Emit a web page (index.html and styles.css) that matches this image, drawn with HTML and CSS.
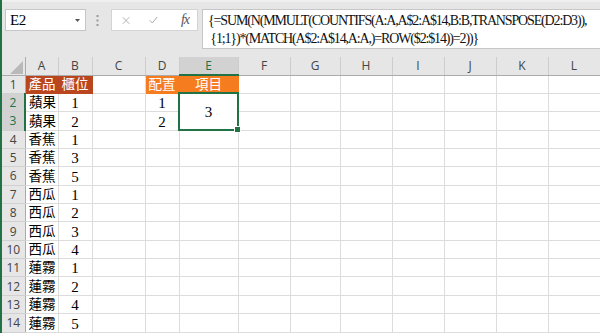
FILE: index.html
```html
<!DOCTYPE html>
<html lang="zh-Hant">
<head>
    <meta charset="UTF-8">
    <meta name="viewport" content="width=device-width, initial-scale=1.0">
    <title>Excel - 配置項目</title>
    <link rel="stylesheet" href="styles.css">
</head>
<body>
    <div class="app">
        <div class="toolbar">
            <div class="namebox">
                <span>E2</span>
                <svg class="caret" width="5" height="3" viewBox="0 0 5 3"><path d="M0 0h5L2.5 3z" fill="#555"/></svg>
            </div>
            <svg class="grip" width="3" height="11" viewBox="0 0 3 11">
                <rect x="0.5" y="0" width="2" height="2" fill="#9a9a9a"/>
                <rect x="0.5" y="4.5" width="2" height="2" fill="#9a9a9a"/>
                <rect x="0.5" y="9" width="2" height="2" fill="#9a9a9a"/>
            </svg>
            <div class="fxbox">
                <svg width="11" height="11" viewBox="0 0 11 11"><path d="M1 1l9 9M10 1l-9 9" stroke="#a6a6a6" stroke-width="1.2" fill="none"/></svg>
                <svg width="12" height="10" viewBox="0 0 12 10"><path d="M1 5.5l3.5 3.5L11 1" stroke="#a6a6a6" stroke-width="1.3" fill="none"/></svg>
                <span class="fx">fx</span>
            </div>
            <div class="formula">{=SUM(N(MMULT(COUNTIFS(A:A,A$2:A$14,B:B,TRANSPOSE(D2:D3)),<br> {1;1})*(MATCH(A$2:A$14,A:A,)=ROW($2:$14))=2))}</div>
        </div>

        <table class="sheet">
            <colgroup>
                <col class="c-rn"><col class="c-a"><col class="c-b"><col class="c-c"><col class="c-d"><col class="c-e">
                <col class="c-f"><col class="c-g"><col class="c-h"><col class="c-i"><col class="c-j"><col class="c-k"><col class="c-l">
            </colgroup>
            <tr class="head">
                <th class="corner"><svg width="13" height="13" viewBox="0 0 13 13"><path d="M13 0v13H0z" fill="#b9b9b9"/></svg></th>
                <th>A</th><th>B</th><th>C</th><th>D</th><th class="sel">E</th><th>F</th><th>G</th><th>H</th><th>I</th><th>J</th><th>K</th><th>L</th>
            </tr>
            <tr><th class="rn">1</th><td class="fill-red">產品</td><td class="fill-red mid">櫃位</td><td></td><td class="fill-orange mid">配置</td><td class="fill-orange mid">項目</td><td></td><td></td><td></td><td></td><td></td><td></td><td></td></tr>
            <tr><th class="rn sel">2</th><td>蘋果</td><td class="mid">1</td><td></td><td class="mid">1</td><td class="merged mid" rowspan="2">3<span class="handle"></span></td><td></td><td></td><td></td><td></td><td></td><td></td><td></td></tr>
            <tr><th class="rn sel">3</th><td>蘋果</td><td class="mid">2</td><td></td><td class="mid">2</td><td></td><td></td><td></td><td></td><td></td><td></td><td></td></tr>
            <tr><th class="rn">4</th><td>香蕉</td><td class="mid">1</td><td></td><td></td><td></td><td></td><td></td><td></td><td></td><td></td><td></td><td></td></tr>
            <tr><th class="rn">5</th><td>香蕉</td><td class="mid">3</td><td></td><td></td><td></td><td></td><td></td><td></td><td></td><td></td><td></td><td></td></tr>
            <tr><th class="rn">6</th><td>香蕉</td><td class="mid">5</td><td></td><td></td><td></td><td></td><td></td><td></td><td></td><td></td><td></td><td></td></tr>
            <tr><th class="rn">7</th><td>西瓜</td><td class="mid">1</td><td></td><td></td><td></td><td></td><td></td><td></td><td></td><td></td><td></td><td></td></tr>
            <tr><th class="rn">8</th><td>西瓜</td><td class="mid">2</td><td></td><td></td><td></td><td></td><td></td><td></td><td></td><td></td><td></td><td></td></tr>
            <tr><th class="rn">9</th><td>西瓜</td><td class="mid">3</td><td></td><td></td><td></td><td></td><td></td><td></td><td></td><td></td><td></td><td></td></tr>
            <tr><th class="rn">10</th><td>西瓜</td><td class="mid">4</td><td></td><td></td><td></td><td></td><td></td><td></td><td></td><td></td><td></td><td></td></tr>
            <tr><th class="rn">11</th><td>蓮霧</td><td class="mid">1</td><td></td><td></td><td></td><td></td><td></td><td></td><td></td><td></td><td></td><td></td></tr>
            <tr><th class="rn">12</th><td>蓮霧</td><td class="mid">2</td><td></td><td></td><td></td><td></td><td></td><td></td><td></td><td></td><td></td><td></td></tr>
            <tr><th class="rn">13</th><td>蓮霧</td><td class="mid">4</td><td></td><td></td><td></td><td></td><td></td><td></td><td></td><td></td><td></td><td></td></tr>
            <tr><th class="rn">14</th><td>蓮霧</td><td class="mid">5</td><td></td><td></td><td></td><td></td><td></td><td></td><td></td><td></td><td></td><td></td></tr>
        </table>
    </div>
</body>
</html>
```

FILE: styles.css
```css
* {
    box-sizing: border-box;
}

body {
    margin: 0;
    width: 600px;
    height: 333px;
    overflow: hidden;
    background-color: #e6e6e6;
    font-family: "Liberation Serif", "Noto Sans CJK TC", serif;
    color: #000;
}

.app {
    height: 333px;
    border-left: 2px solid #217346;
}

/* formula bar */
.toolbar {
    display: flex;
    align-items: flex-start;
    height: 57px;
    padding: 9px 0 0 3px;
    border-top: 2px solid #efefef;
}

.namebox {
    display: flex;
    align-items: center;
    justify-content: space-between;
    width: 81px;
    height: 22px;
    margin-top: -2px;
    padding: 0 5px 0 4px;
    background-color: white;
    border: 1px solid #c6c6c6;
    font-size: 15px;
    letter-spacing: -0.5px;
}

.grip {
    margin: 4px 12px 0 10px;
}

.fxbox {
    display: flex;
    align-items: center;
    width: 87px;
    height: 22px;
    margin-top: -2px;
    padding: 0 8px 0 10px;
    gap: 19px;
    background-color: white;
    border: 1px solid #d4d4d4;
}

.fx {
    margin-left: 4px;
    font-style: italic;
    font-size: 14px;
    color: #555;
    letter-spacing: -1px;
}

.formula {
    flex: 1;
    height: 40px;
    margin: -2px 0 0 4px;
    padding: 2px 0 0 5px;
    background-color: white;
    border: 1px solid #c6c6c6;
    border-right: none;
    font-size: 14px;
    line-height: 18px;
    letter-spacing: -1.15px;
    white-space: pre;
    color: #111;
}

/* sheet grid */
.sheet {
    border-collapse: collapse;
    table-layout: fixed;
    width: 598px;
    background-color: white;
}

.c-rn { width: 23px; }
.c-a { width: 33px; }
.c-b { width: 34px; }
.c-c { width: 53px; }
.c-d { width: 34px; }
.c-e { width: 59px; }
.c-f { width: 52px; }
.c-g { width: 50px; }
.c-h, .c-i, .c-j, .c-k { width: 52px; }
.c-l { width: 52px; }

.sheet tr {
    height: 18.36px;
}

.sheet tr.head {
    height: 18px;
}

.head th {
    padding: 0;
    background-color: #e6e6e6;
    border-right: 1px solid #cdcdcd;
    border-bottom: 1px solid #ababab;
    font-family: "Open Sans", "Liberation Sans", sans-serif;
    font-size: 12px;
    font-weight: normal;
    color: #444;
    text-align: center;
}

.head th.corner {
    text-align: right;
    vertical-align: bottom;
    padding: 0 2px 1px 0;
    border-right: 1px solid #ababab;
}

.head th.corner svg {
    display: block;
    margin-left: auto;
}

.head th.sel {
    background-color: #d2d2d2;
    color: #217346;
    border-bottom: 2px solid #217346;
}

th.rn {
    padding: 0;
    background-color: #e6e6e6;
    border-right: 1px solid #ababab;
    border-bottom: 1px solid #d0d0d0;
    font-family: "Open Sans", "Liberation Sans", sans-serif;
    font-size: 12px;
    font-weight: normal;
    color: #444;
    text-align: center;
}

th.rn.sel {
    background-color: #d2d2d2;
    color: #217346;
    border-right: 2px solid #217346;
}

.sheet td {
    padding: 0 1px 0 3px;
    border: 1px solid #dcdcdc;
    font-size: 13.5px;
    line-height: 16px;
    vertical-align: bottom;
    white-space: nowrap;
    overflow: hidden;
}

.sheet td.mid {
    text-align: center;
    padding: 0 1px;
    font-size: 15px;
}

.sheet td.fill-red {
    background-color: #b9461f;
    color: white;
    border-color: #b9461f;
    font-size: 13.5px;
}

.sheet td.fill-orange {
    background-color: #f57d20;
    color: white;
    border-color: #f57d20;
    font-size: 13.5px;
}

.sheet td.merged {
    position: relative;
    vertical-align: middle;
    overflow: visible;
    outline: 2px solid #217346;
    outline-offset: -1px;
}

.handle {
    position: absolute;
    right: -3px;
    bottom: -3px;
    width: 5px;
    height: 5px;
    background-color: #217346;
    border: 1px solid white;
    box-sizing: content-box;
}
```
